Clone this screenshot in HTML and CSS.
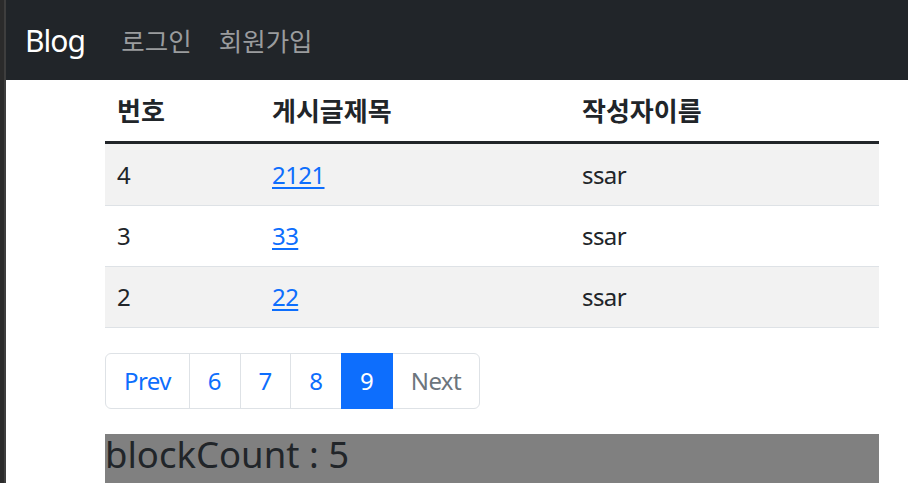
FILE: index.html
```html
<!DOCTYPE html>
<html lang="ko">
<head>
<meta charset="utf-8">
<title>Blog</title>
<link rel="stylesheet" href="styles.css">
</head>
<body>
<div class="frame">
  <div class="edge"></div>
  <div class="page">
    <nav class="navbar">
      <a class="brand" href="#">Blog</a>
      <ul class="nav">
        <li><a class="nav-link" href="#">로그인</a></li>
        <li><a class="nav-link" href="#">회원가입</a></li>
      </ul>
    </nav>
    <main class="container">
      <table class="table">
        <thead>
          <tr>
            <th class="c1">번호</th>
            <th class="c2">게시글제목</th>
            <th>작성자이름</th>
          </tr>
        </thead>
        <tbody>
          <tr class="odd"><td>4</td><td><a href="#">2121</a></td><td>ssar</td></tr>
          <tr><td>3</td><td><a href="#">33</a></td><td>ssar</td></tr>
          <tr class="odd"><td>2</td><td><a href="#">22</a></td><td>ssar</td></tr>
        </tbody>
      </table>
      <ul class="pagination">
        <li class="page-item word"><a class="page-link" href="#">Prev</a></li>
        <li class="page-item"><a class="page-link" href="#">6</a></li>
        <li class="page-item"><a class="page-link" href="#">7</a></li>
        <li class="page-item"><a class="page-link" href="#">8</a></li>
        <li class="page-item active"><a class="page-link" href="#">9</a></li>
        <li class="page-item word disabled"><a class="page-link" href="#">Next</a></li>
      </ul>
      <div class="block-count">blockCount : 5</div>
    </main>
  </div>
</div>
</body>
</html>
```

FILE: styles.css
```css
* { box-sizing: border-box; }
html, body { margin: 0; padding: 0; height: 100%; }
body {
  font-family: "Noto Sans", "Noto Sans CJK KR", sans-serif;
  font-size: 24px;
  line-height: 36px;
  color: #212529;
  background: #fff;
  overflow: hidden;
}
.frame { display: flex; min-height: 100%; }
.edge {
  width: 6px;
  flex: none;
  background: #2b2b2b;
  border-right: 2px solid #3e3e3e;
}
.page { flex: 1; min-width: 0; }

.navbar {
  height: 80px;
  background: #212529;
  display: flex;
  align-items: center;
  padding: 0 18px 0 19px;
}
.brand {
  color: #fff;
  text-decoration: none;
  font-size: 30px;
  line-height: 45px;
  letter-spacing: -1px;
  margin-right: 24px;
}
.nav { list-style: none; margin: 0; padding: 0; display: flex; }
.nav-link {
  display: block;
  padding: 0 13.5px;
  color: #9a9c9e;
  text-decoration: none;
  font-family: "Noto Sans CJK KR", sans-serif;
  font-size: 25.5px;
}
.nav li:first-child .nav-link { padding-left: 12.5px; }

.container { margin-left: 99px; width: 774px; }

.table {
  width: 100%;
  border-collapse: collapse;
  margin-bottom: 25px;
  letter-spacing: -0.6px;
}
.table th, .table td {
  text-align: left;
  padding: 12px 12px;
  border-bottom: 1px solid #dee2e6;
  vertical-align: top;
}
.table th {
  font-family: "Noto Sans CJK KR", sans-serif;
  font-weight: 700;
  font-size: 26px;
  letter-spacing: 0;
  padding-bottom: 13px;
}
.table tbody tr:first-child td { border-top: 3px solid #212529; padding-top: 13px; }
.table .c1 { width: 155px; }
.table .c2 { width: 310px; }
.table tr.odd td { background: #f2f2f2; }
.table a { color: #0d6efd; text-decoration: underline; text-underline-offset: 3px; }

.pagination {
  list-style: none;
  margin: 0 0 25px;
  padding: 0;
  display: flex;
}
.page-link {
  display: block;
  padding: 9px 18px;
  border: 1px solid #dee2e6;
  margin-left: -1px;
  color: #0d6efd;
  text-decoration: none;
  background: #fff;
}
.page-item.word .page-link { letter-spacing: -0.6px; }
.page-item:first-child .page-link { margin-left: 0; border-radius: 6px 0 0 6px; }
.page-item:last-child .page-link { border-radius: 0 6px 6px 0; }
.page-item.active .page-link {
  background: #0d6efd;
  border-color: #0d6efd;
  color: #fff;
  position: relative;
}
.page-item.disabled .page-link { color: #6c757d; }

.block-count {
  background: #808080;
  font-size: 36.5px;
  line-height: 40px;
  color: #212529;
  height: 60px;
}
```
